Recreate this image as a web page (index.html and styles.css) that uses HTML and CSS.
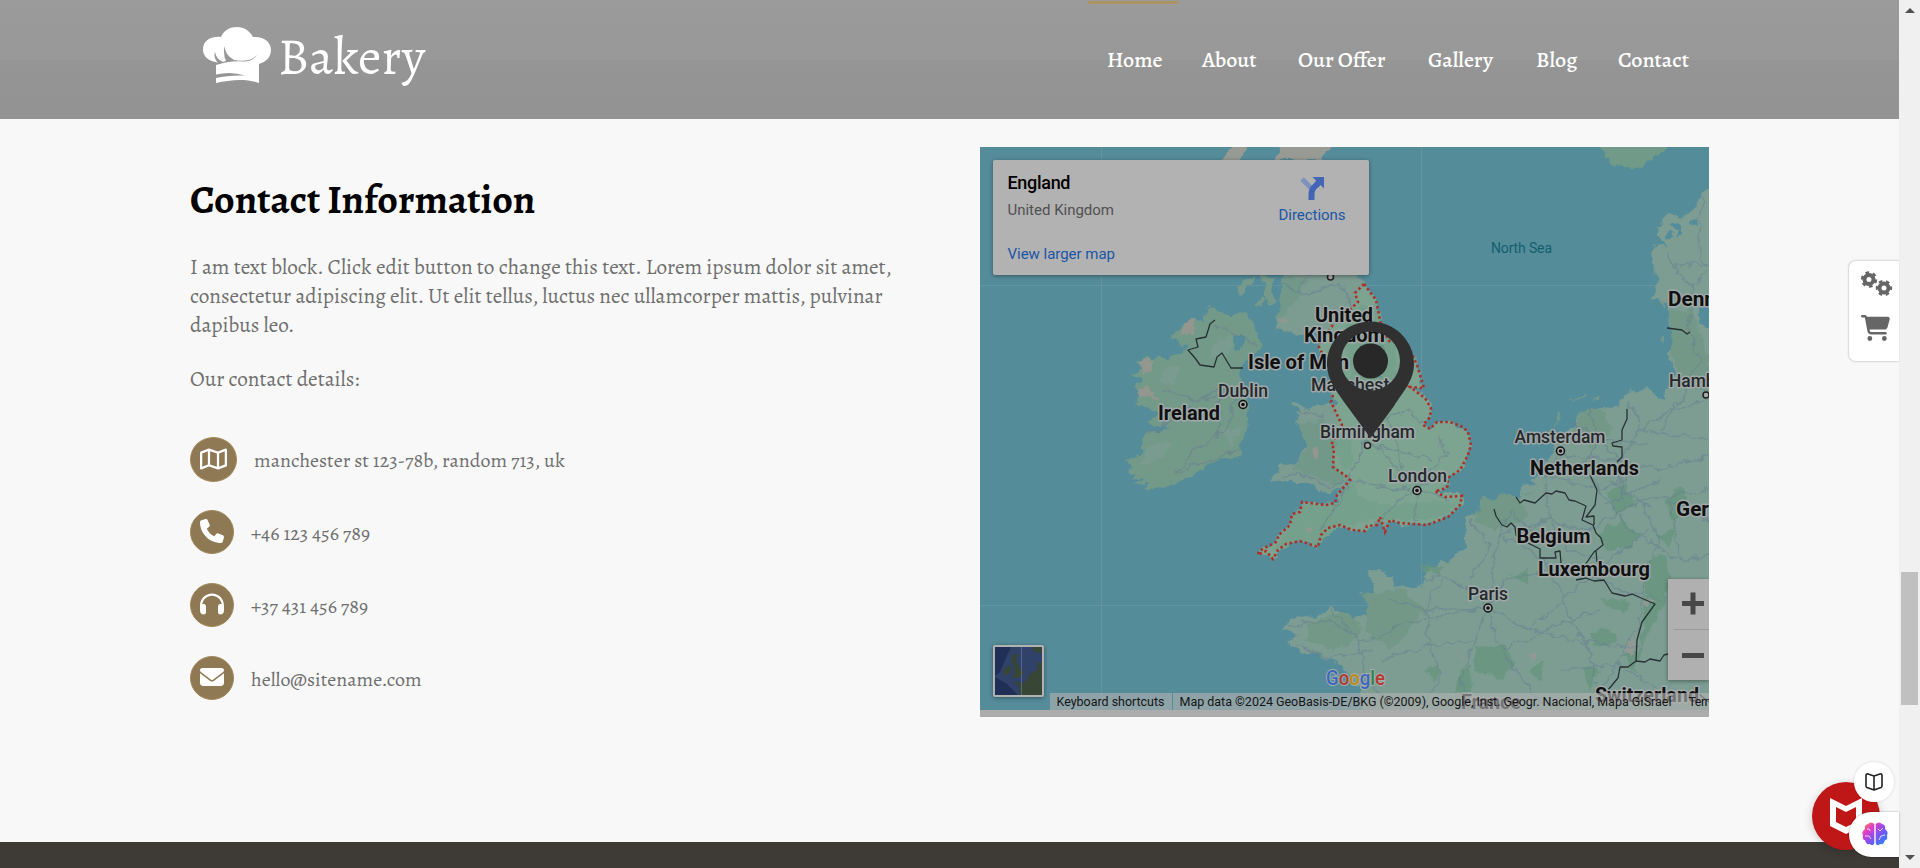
FILE: index.html
```html
<!DOCTYPE html>
<html lang="en">
<head>
<meta charset="utf-8">
<title>Bakery - Contact</title>
<link rel="stylesheet" href="styles.css">
</head>
<body>
<div class="window">
<div class="page">
  <header class="header">
    <span class="accent"></span>
    <a class="logo">
      <svg width="68" height="56" viewBox="0 0 68 56"><path fill="#fff" d="M13 35C5 34 0 29 0 22.500C0 14 7 9 18 10C21 3 27 0 34 0S47 4 50 10C61 9 68 15 68 23C68 30 63 35 56 37V56C42 51 27 53 13 56V51Q25 48 42 48.500Q28 44 13 47.500V38Q27 33 42 34.500Q50 34 54 28Q46 36 31 33Q22 28 21.500 19Q20 28 23 34L20 35Q13 32 12 25Q10 30 15 36Z"/></svg>
      <span class="logo-text">Bakery</span>
    </a>
    <nav class="nav"><a>Home</a><a>About</a><a>Our Offer</a><a>Gallery</a><a>Blog</a><a>Contact</a></nav>
  </header>
  <main class="main">
    <section class="info">
      <h1>Contact Information</h1>
      <p class="l1">I am text block. Click edit button to change this text. Lorem ipsum dolor sit amet, <br>consectetur adipiscing elit. Ut elit tellus, luctus nec ullamcorper mattis, pulvinar <br>dapibus leo.</p>
      <p class="details">Our contact details:</p>
      <ul class="list">
        <li><span class="ico wide"><svg width="27" height="24" viewBox="0 0 576 512"><path fill="#fff" d="M565.600 36.200C572.100 40.700 576 48.100 576 56V392c0 10-6.200 18.900-15.500 22.400l-168 64c-5.200 2-10.900 2.100-16.100.3L192.500 417.500l-160 61c-7.400 2.800-15.700 1.800-22.200-2.700S0 463.900 0 456V120c0-10 6.100-18.900 15.500-22.400l168-64c5.200-2 10.900-2.100 16.100-.3L383.500 94.500l160-61c7.400-2.800 15.700-1.800 22.200 2.700zM48 136.500V421.200l120-45.700V90.800L48 136.500zM360 422.700V137.300l-144-48V374.700l144 48zm48-1.500l120-45.700V90.800L408 136.500V421.200z"/></svg></span><span>manchester st 123-78b, random 713, uk</span></li>
        <li><span class="ico"><svg width="24" height="24" viewBox="0 0 512 512"><path fill="#fff" d="M164.900 24.600c-7.700-18.600-28-28.500-47.400-23.200l-88 24C12.100 30.200 0 46 0 64C0 311.400 200.600 512 448 512c18 0 33.800-12.100 38.600-29.500l24-88c5.300-19.400-4.600-39.700-23.200-47.400l-96-40c-16.300-6.800-35.200-2.100-46.300 11.600L304.700 368C234.300 334.700 177.300 277.700 144 207.300L193.300 167c13.700-11.200 18.400-30 11.600-46.300l-40-96z"/></svg></span><span>+46 123 456 789</span></li>
        <li><span class="ico"><svg width="24" height="24" viewBox="0 0 512 512"><path fill="#fff" d="M256 80C149.900 80 62.400 159.400 49.600 262c9.400-3.800 19.600-6 30.400-6c26.500 0 48 21.500 48 48V432c0 26.500-21.500 48-48 48c-44.200 0-80-35.800-80-80V288C0 146.600 114.600 32 256 32s256 114.600 256 256V400c0 44.200-35.800 80-80 80c-26.500 0-48-21.500-48-48V304c0-26.500 21.500-48 48-48c10.800 0 21 2.100 30.400 6C449.600 159.400 362.100 80 256 80z"/></svg></span><span>+37 431 456 789</span></li>
        <li><span class="ico"><svg width="24" height="24" viewBox="0 0 512 512"><path fill="#fff" d="M48 64C21.500 64 0 85.500 0 112c0 15.100 7.100 29.300 19.200 38.400L236.800 313.600c11.400 8.500 27 8.500 38.400 0L492.800 150.400c12.100-9.100 19.200-23.300 19.200-38.400c0-26.500-21.500-48-48-48H48zM0 176V384c0 35.300 28.700 64 64 64H448c35.300 0 64-28.700 64-64V176L294.400 339.200c-22.800 17.100-54 17.100-76.800 0L0 176z"/></svg></span><span>hello@sitename.com</span></li>
      </ul>
    </section>
    <section class="map">
      <svg width="729" height="570" viewBox="980 147 729 570">
        <defs><filter id="coast" filterUnits="userSpaceOnUse" x="970" y="137" width="749" height="590"><feTurbulence type="fractalNoise" baseFrequency=".09" numOctaves="3" seed="4"/><feDisplacementMap in="SourceGraphic" scale="11" xChannelSelector="R" yChannelSelector="G"/></filter></defs>
        <rect class="sea" x="980" y="147" width="729" height="563"/>
        <g class="grid"><path d="M1101.500 147V710M1421.500 147V710M980 285.500H1709M980 605.500H1709"/></g>
        <g filter="url(#coast)">
        <g class="land">
          <path d="M1220 162L1226 154L1243 140H1250L1240 161ZM1268 160L1282 153L1272 140H1331L1322 160Z" fill="#979b94"/>
          <path d="M1588 140L1608 156L1611 165L1624 166L1633 169L1645 166L1672 140Z" fill="#719b88"/>
          <path fill="#7c9b91" d="M1283 270L1285 284L1291 292L1290 302L1278 318L1274 330L1290 332L1300 337L1310 330L1318 338L1322 350L1332 360L1334 385L1330 395L1340 407L1320 405L1307 410L1295 402L1291 404L1300 411L1296 422L1303 430L1307 445L1296 462L1279 466L1273 480L1290 483L1305 483L1318 491L1330 494L1346 486L1337 495L1335 503L1313 502L1302 504L1300 512L1292 514L1290 525L1279 535L1274 544L1259 551L1259 555L1266 553L1273 559L1278 549L1286 544L1300 541L1318 547L1321 535L1328 528L1340 525L1352 530L1365 531L1380 522L1385 530L1390 520L1427 525L1448 517L1460 505L1462 496L1445 497L1435 491L1447 488L1448 478L1460 470L1468 455L1471 445L1468 432L1450 422L1437 422L1430 429L1423 425L1431 415L1429 402L1412 387L1423 388L1417 365L1408 340L1385 340L1380 320L1376 300L1364 284L1350 270Z"/>
          <path fill="#7da391" d="M1364 284L1355 293L1358 302L1342 317L1318 345L1324 357L1334 365L1333 395L1338 418L1331 445L1333 467L1345 474L1346 487L1335 503L1313 502L1302 504L1290 525L1274 544L1259 551L1273 559L1286 544L1300 541L1318 547L1321 535L1340 525L1365 531L1380 522L1427 525L1448 517L1460 505L1462 496L1435 491L1447 488L1448 478L1460 470L1471 445L1468 432L1450 422L1437 422L1430 429L1423 425L1431 415L1429 402L1412 387L1423 388L1408 340L1385 340L1376 300Z"/>
          <path fill="#74a08b" d="M1302 504L1335 503L1348 480L1365 500L1400 505L1430 500L1458 503L1445 517L1380 520L1340 525L1318 545L1300 541L1274 550L1290 525ZM1334 440L1350 430L1352 465L1345 472ZM1345 310L1375 305L1395 345L1400 380L1350 380Z"/>
          <path fill="#729889" d="M1300 425L1325 418L1336 445L1334 466L1345 474L1340 487L1312 475L1290 470L1307 450ZM1283 275L1310 282L1298 295L1278 320Z"/>
          <path d="M1237 290L1243 280L1255 276L1250 287L1240 295ZM1262 276H1276L1272 290L1275 302L1268 305L1265 292ZM1255 308L1262 296L1266 300L1260 309Z" fill="#74998a"/>
          <path fill="#739989" d="M1211 307L1222 313L1230 320L1236 313L1249 315L1258 335L1264 345L1248 358L1238 368L1245 385L1249 410L1246 430L1241 445L1240 458L1215 460L1200 470L1188 478L1175 485L1155 488L1142 491L1150 482L1136 485L1144 478L1132 480L1138 473L1126 473L1131 466L1125 460L1135 456L1148 451L1140 445L1147 433L1170 428L1146 424L1160 415L1150 408L1136 402L1140 395L1133 385L1142 377L1133 375L1142 366L1135 358L1152 358L1165 360L1178 352L1188 345L1172 340L1183 322L1195 318L1204 322L1206 309Z"/>
          <path fill="#7d9b91" opacity=".7" d="M1210 345L1235 335L1230 355L1212 358ZM1165 370L1180 365L1175 385L1160 380ZM1150 445L1175 440L1160 460L1140 465ZM1222 425L1240 430L1230 450Z"/>
          <path fill="#949690" d="M1183 322L1198 318L1192 332L1180 336ZM1140 359L1152 360L1152 372L1142 375ZM1137 390L1150 385L1157 400L1142 397ZM1278 320L1286 318L1286 326ZM1314 449L1319 450L1318 459L1313 456ZM1305 528L1311 530L1307 534Z"/>
          <path fill="#7d9d93" d="M1720 185L1703 193L1690 212L1676 217L1663 218L1656 230L1660 240L1670 248L1655 244L1652 250L1654 270L1658 282L1653 297L1667 305L1668 328L1672 345L1667 358L1675 372L1668 385L1664 400L1658 398L1650 388L1630 390L1621 400L1620 408L1600 407L1580 412L1574 425L1555 440L1550 455L1538 478L1520 489L1520 497L1500 505L1490 510L1466 518L1466 550L1440 562L1425 575L1423 587L1413 588L1395 585L1385 572L1368 571L1369 582L1376 592L1379 615L1358 617L1345 622L1337 609L1328 609L1320 615L1290 620L1285 630L1298 634L1288 643L1300 652L1315 653L1330 660L1345 668L1352 678L1360 690L1362 720H1720Z"/>
          <path fill="#739887" d="M1668 310H1690L1709 355V395L1680 380L1670 350ZM1365 595L1400 588L1425 610L1390 650L1368 635ZM1480 500L1510 494L1530 515L1500 530L1475 522ZM1580 410L1600 408L1612 430L1590 450L1575 435ZM1310 622L1340 612L1365 625L1340 650L1305 640Z"/>
          <path fill="#67957f" opacity=".85" d="M1608 492L1625 480L1635 505L1615 515ZM1600 530L1622 520L1640 535L1628 550L1605 548ZM1646 560L1665 555L1672 580L1662 610L1640 650L1645 600ZM1600 598L1630 600L1625 613L1610 605ZM1590 632L1610 628L1615 642L1595 648ZM1475 648L1505 645L1515 665L1500 680L1475 672ZM1460 670L1470 665L1472 690L1455 695ZM1530 670L1545 660L1540 682ZM1580 665L1600 670L1590 690ZM1622 655L1640 650L1635 672ZM1675 610L1688 600L1690 630L1675 640ZM1418 565L1445 568L1440 575ZM1665 500L1680 485L1690 510L1670 520ZM1655 535L1675 530L1668 545ZM1510 575L1528 568L1530 585ZM1425 670L1438 665L1435 680Z"/>
          <path fill="#929994" d="M1630 640L1636 635L1633 655L1625 652ZM1528 655L1540 654L1535 661ZM1646 601L1654 602L1647 606ZM1458 655L1463 656L1459 660Z"/>
          <path fill="#558c9a" d="M1668 225L1683 222V235L1676 240L1680 228ZM1665 235L1672 232L1674 238L1667 240ZM1690 222L1698 219L1695 226ZM1700 300L1720 290V330L1698 325ZM1522 482L1538 485L1530 488L1520 487ZM1234 337H1243V348H1235Z"/>
          <path fill="#759a8b" d="M1556 425L1560 413L1563 420ZM1568 400L1585 396L1583 399ZM1590 398L1602 396L1600 399ZM1520 490L1535 490L1528 495ZM1658 300L1665 302V310ZM1662 340L1666 335L1666 342ZM1357 592L1364 593L1360 595Z"/>
        </g>
        <g class="roads">
          <path d="M1215 325L1235 335L1258 345M1160 390L1195 400L1240 395M1190 405L1170 420L1150 434M1237 398L1225 430L1190 455L1175 472L1240 450M1200 400L1222 385L1218 440M1283 285L1310 295L1340 280L1352 310M1297 290L1310 275M1280 476L1305 475L1330 487L1350 480L1400 490M1365 440L1355 465L1340 500L1320 530M1365 440L1380 450L1415 485M1378 447L1430 458M1370 400L1395 430L1400 465L1417 490M1350 380L1375 405L1385 350L1365 310M1375 525L1400 500L1417 490L1450 500M1417 490L1445 455L1440 435M1417 490L1375 488M1300 410L1325 418M1417 490L1415 522M1385 420L1410 410L1425 425"/>
          <path d="M1290 625L1330 620L1360 640L1380 638L1400 625L1440 615L1488 608M1295 645L1330 658L1372 650M1360 640L1365 680L1400 710M1488 608L1470 590L1440 575L1425 580M1488 608L1505 580L1540 572L1580 570L1620 590L1660 600M1488 608L1530 630L1580 642L1640 648M1488 608L1475 640L1430 645L1380 660M1488 608L1500 650L1530 690L1550 710M1488 608L1493 570L1500 535L1510 510M1500 535L1548 520L1590 530L1640 500L1709 490M1470 520L1490 545L1470 580M1500 535L1545 560L1560 590L1570 620L1590 650L1600 710M1548 520L1545 475L1560 455L1620 460L1660 470L1709 455M1545 475L1600 490L1640 470M1600 440L1580 470L1600 490L1630 530L1680 560L1709 555M1590 410L1600 440L1620 460L1640 430L1709 440M1630 400L1640 430L1670 410L1709 400M1640 500L1660 540L1645 570L1640 620L1620 660L1600 690M1430 645L1425 610L1440 580M1430 645L1440 680L1420 710M1475 640L1460 680L1475 710M1360 640L1330 610M1530 630L1560 600L1610 560L1650 530M1510 510L1530 530L1548 520L1570 550L1600 560M1390 600L1425 610L1488 608M1690 330L1700 360L1680 400L1660 430M1668 255L1680 275L1692 285L1709 270M1703 195L1698 240L1705 265M1692 285L1688 330M1675 265L1709 265M1570 420L1600 440L1650 445M1610 480L1650 510M1620 470L1625 510M1605 505L1660 480M1680 560L1670 500L1709 520M1560 670L1620 665L1660 690M1500 650L1570 620L1600 610"/>
        </g>
        </g>
        <g class="borders">
          <path d="M1215 320L1210 324L1206 337L1196 339L1198 347L1188 350L1195 358L1200 365L1214 367L1217 357L1222 353L1231 368L1243 368"/>
          <path d="M1494 509L1496 516L1502 525L1507 527L1511 523L1515 527L1516 535L1522 540L1540 549V556L1540 558H1556L1555 552L1560 551L1561 563M1516 497L1520 503L1524 500L1535 503L1546 493L1552 494L1556 491L1565 493L1569 500L1575 501L1586 506L1582 520L1593 525L1596 533L1601 538L1603 545L1594 552L1585 565M1590 475L1597 490L1595 505L1586 517L1594 516L1594 525M1596 551L1597 562M1576 580L1586 578L1594 581L1604 580L1612 593L1625 596L1632 594L1655 604L1642 622L1637 640L1636 661L1628 667L1620 667L1618 678L1608 690M1636 661L1645 662L1650 659L1660 661L1664 655L1668 654M1622 430V440L1612 443L1613 446L1622 447V457L1617 462M1627 409V419L1622 430M1667 328L1682 330L1687 334L1690 332M1692 690V695L1700 695L1709 702"/>
        </g>
        <path class="england" d="M1364 284L1355 293L1358 302L1342 317M1333 325L1318 345L1324 357M1333 395L1331 402L1342 425L1331 445L1334 448L1333 467L1346 476L1350 480L1337 495L1335 503L1326 505L1302 502L1300 512L1292 514L1290 525L1279 535L1276 542L1259 551L1258 555L1266 551L1273 559L1278 550L1286 544L1300 541L1318 547L1321 535L1328 528L1340 525L1352 530L1365 531L1367 526L1377 525L1380 517L1385 532L1390 520L1400 523L1427 525L1448 517L1460 505L1462 496L1445 497L1435 491L1447 488L1448 478L1460 470L1468 455L1471 445L1468 432L1463 427L1450 422L1437 422L1430 429L1423 425L1430 417L1431 408L1425 398L1410 387L1424 388L1417 365L1408 345M1390 342L1382 330L1376 300L1364 284"/>
        <g class="cities">
          <g class="dots"><circle cx="1243" cy="404.500" r="4"/><circle cx="1417" cy="490.500" r="4"/><circle cx="1560.500" cy="451" r="4"/><circle cx="1488" cy="608" r="4"/></g>
          <g class="cores"><circle cx="1243" cy="404.500" r="1.800"/><circle cx="1417" cy="490.500" r="1.800"/><circle cx="1560.500" cy="451" r="1.800"/><circle cx="1488" cy="608" r="1.800"/></g>
          <g class="small"><circle cx="1367.500" cy="445.500" r="3"/><circle cx="1330.500" cy="277" r="3"/><circle cx="1706" cy="395" r="3"/></g>
        </g>
        <g class="country">
          <text x="1315" y="321.500" textLength="58" lengthAdjust="spacingAndGlyphs">United</text><text x="1304" y="341.500" textLength="81" lengthAdjust="spacingAndGlyphs">Kingdom</text>
          <text x="1248" y="369" textLength="101" lengthAdjust="spacingAndGlyphs">Isle of Man</text><text x="1158" y="420" textLength="62" lengthAdjust="spacingAndGlyphs">Ireland</text>
          <text x="1668" y="306" textLength="84" lengthAdjust="spacingAndGlyphs">Denmark</text><text x="1530" y="475" textLength="109" lengthAdjust="spacingAndGlyphs">Netherlands</text>
          <text x="1676" y="516" textLength="84" lengthAdjust="spacingAndGlyphs">Germany</text><text x="1516.500" y="543" textLength="74" lengthAdjust="spacingAndGlyphs">Belgium</text>
          <text x="1538" y="575.500" textLength="112" lengthAdjust="spacingAndGlyphs">Luxembourg</text><text x="1595" y="702" textLength="104" lengthAdjust="spacingAndGlyphs">Switzerland</text><text x="1461" y="709" textLength="60" lengthAdjust="spacingAndGlyphs">France</text>
        </g>
        <g class="city">
          <text x="1218" y="396.500" textLength="50" lengthAdjust="spacingAndGlyphs">Dublin</text><text x="1311" y="391" textLength="94" lengthAdjust="spacingAndGlyphs">Manchester</text>
          <text x="1320" y="438" textLength="95" lengthAdjust="spacingAndGlyphs">Birmingham</text><text x="1388" y="482" textLength="59" lengthAdjust="spacingAndGlyphs">London</text>
          <text x="1514.500" y="443" textLength="91" lengthAdjust="spacingAndGlyphs">Amsterdam</text><text x="1468" y="600" textLength="40" lengthAdjust="spacingAndGlyphs">Paris</text><text x="1669" y="387" textLength="72" lengthAdjust="spacingAndGlyphs">Hamburg</text>
        </g>
        <text class="ocean" x="1491" y="253" textLength="61">North Sea</text>
        <path fill="#303030" fill-rule="evenodd" d="M1370.500 321.500C1346 321.500 1327 341 1327 364C1327 381 1338 393 1347 406L1370.500 438L1394 406C1402 393 1414 381 1414 364C1414 341 1395 321.500 1370.500 321.500ZM1370.500 331.500A29.500 29.500 0 1 1 1370.500 390.500A29.500 29.500 0 1 1 1370.500 331.500Z"/>
        <circle cx="1370.500" cy="361" r="17.500" fill="#282828"/>
        <g class="google"><text x="1326" y="685" textLength="59" lengthAdjust="spacingAndGlyphs"><tspan fill="#3b68bd">G</tspan><tspan fill="#b03a32">o</tspan><tspan fill="#b88c16">o</tspan><tspan fill="#3b68bd">g</tspan><tspan fill="#2f8549">l</tspan><tspan fill="#b53a32">e</tspan></text></g>
        <path d="M1050 693H1172V710H1050ZM1173 693H1709V710H1173Z" fill="#b2b2b2" opacity=".62"/>
        <g class="credits"><text x="1056.500" y="706" textLength="108">Keyboard shortcuts</text><text x="1179.500" y="706" textLength="492">Map data ©2024 GeoBasis-DE/BKG (©2009), Google, Inst. Geogr. Nacional, Mapa GISrael</text><text x="1688.500" y="706" textLength="33">Terms</text></g>
        <rect x="980" y="710" width="729" height="7" fill="#acacac"/>
        <g class="card"><rect x="993" y="160" width="376" height="115" rx="2" fill="#b2b2b2"/></g>
        <text class="title" x="1007.500" y="189" textLength="63">England</text>
        <text class="sub" x="1007.500" y="215" textLength="106.500">United Kingdom</text>
        <text class="link" x="1007.500" y="259" textLength="107.500">View larger map</text>
        <text class="link" x="1278.500" y="220" textLength="67">Directions</text>
        <path d="M1302 179L1312 189" stroke="#7d92bd" stroke-width="5"/><path d="M1311.500 200V194Q1311.500 189 1316 185.500L1320 181" fill="none" stroke="#4266b5" stroke-width="6"/><path d="M1312.500 177H1324V188.500Z" fill="#4266b5"/>
        <g class="card"><rect x="993" y="645" width="51" height="52" rx="2" fill="#b2b2b2"/></g>
        <rect x="995" y="647" width="47" height="48" fill="#30416a"/>
        <path fill="#202f55" d="M995 647H1011L1005 660L1000 672L995 676ZM995 677L1007 684L1018 695H995Z"/><path fill="#384635" d="M1012 655L1018 654L1016 661L1020 668L1024 673L1021 677L1012 678L1015 669L1011 662ZM1003 671L1008 665L1012 668L1009 674L1004 675ZM1042 663L1037 662L1038 669L1030 674L1024 683L1014 681L1019 687V695H1042ZM1032 647H1042V653L1034 652Z"/><path d="M1021.500 647V695" stroke="#68779a" opacity=".7"/>
        <g class="card"><rect x="1668" y="579" width="41" height="101" fill="#b0b0b0"/></g>
        <path d="M1682 603.500H1704M1693 592.500V614.500M1682 655.500H1704" stroke="#474747" stroke-width="5"/><path d="M1674 629.500H1709" stroke="#999"/>
      </svg>
    </section>
  </main>
  <footer class="footer"></footer>
  <aside class="side-tools">
    <svg width="32" height="26" viewBox="0 0 32 26"><g fill="none" stroke="#666"><circle cx="8" cy="8.500" r="4.500" stroke-width="4"/><circle cx="8" cy="8.500" r="7" stroke-width="2.400" stroke-dasharray="3.660 3.660"/><circle cx="23" cy="17" r="4.500" stroke-width="4"/><circle cx="23" cy="17" r="7" stroke-width="2.400" stroke-dasharray="3.660 3.660" stroke-dashoffset="1.800"/></g></svg>
    <svg width="29" height="26" viewBox="0 0 576 512"><path fill="#666" d="M0 24C0 10.700 10.700 0 24 0H69.500c22 0 41.500 12.800 50.600 32h411c26.300 0 45.500 25 38.600 50.400l-41 152.300c-8.500 31.400-37 53.300-69.500 53.300H170.700l5.400 28.500c2.200 11.300 12.100 19.500 23.600 19.500H488c13.300 0 24 10.700 24 24s-10.700 24-24 24H199.700c-34.600 0-64.300-24.600-70.700-58.500L77.400 54.500c-.7-3.800-4-6.500-7.900-6.500H24C10.700 48 0 37.300 0 24zM128 464a48 48 0 1 1 96 0 48 48 0 1 1-96 0zm336-48a48 48 0 1 1 0 96 48 48 0 1 1 0-96z"/></svg>
  </aside>
  <div class="shield"><svg width="32" height="36" viewBox="0 0 32 36"><path fill="#fff" d="M0 0L16 8L32 0V28L16 36L0 28ZM6 9V24L16 29L26 24V9L16 14Z"/></svg></div>
  <div class="reader"><svg width="18" height="18" viewBox="0 0 18 18" fill="none" stroke="#222" stroke-width="1.600" stroke-linejoin="round"><path d="M9 3L3 1Q1 .5 1 2.500V13Q1 14 2 14.500L9 17L16 14.500Q17 14 17 13V2.500Q17 .5 15 1ZM9 3V17"/></svg></div>
  <div class="brain"><svg width="26" height="25" viewBox="0 0 26 25"><defs><linearGradient id="b" x1="0" y1="0" x2="1" y2="1"><stop offset="0" stop-color="#ff9838"/><stop offset=".28" stop-color="#e33cc4"/><stop offset=".55" stop-color="#8350f3"/><stop offset="1" stop-color="#208df8"/></linearGradient></defs><path fill="url(#b)" d="M12.300 2Q9-1 6 2Q2 3 3 7Q-1 10 1 13Q0 18 3 18Q4 23 8 22Q11 25 12.300 21ZM13.700 2Q17-1 20 2Q24 3 23 7Q27 10 25 13Q26 18 23 18Q22 23 18 22Q15 25 13.700 21Z"/><path d="M5 7Q8 6 8 9M3 14H7L9 17M21 6L18 9L16 7M23 13L19 14L17 18" fill="none" stroke="#fff" stroke-width="1" opacity=".75"/></svg></div>
</div>
<div class="scrollbar"><i class="up"></i><i class="thumb"></i><i class="down"></i></div>
</div>
</body>
</html>
```
FILE: styles.css
```css
* { box-sizing: border-box; }
body { margin: 0; background: #f8f8f8; font-family: Alegreya, "Liberation Serif", serif; overflow: hidden; }
.window { display: flex; height: 868px; }
.page { position: relative; width: 1899px; height: 868px; display: flex; flex-direction: column; }
.header { position: relative; height: 119px; padding: 27px 207px 0 203px; display: flex; justify-content: space-between; background: linear-gradient(#9b9b9b 0, #989898 60px, #959595 60px, #939393 119px); color: #fff; }
.accent { position: absolute; left: 1088px; top: 1px; width: 91px; height: 3px; background: #ac9462; border-radius: 1px; }
.logo { display: flex; gap: 7px; }
.logo-text { font-size: 52px; line-height: 60px; }
.nav { display: grid; grid-template-columns: 95px 96px 130px 108px 82px 74px; font-size: 22px; font-weight: 500; line-height: 66px; white-space: nowrap; }
.main { height: 723px; padding: 28px 190px 0; display: flex; justify-content: space-between; }
.info { width: 730px; color: #6f6f6f; padding-top: 28px; }
h1 { margin: 0; font-size: 40px; line-height: 50px; color: #000; font-weight: 700; white-space: nowrap; }
p { margin: 0; font-size: 21.280px; line-height: 29px; white-space: nowrap; }
.l1 { margin-top: 27px; }
.details { margin-top: 25px; }
.list { list-style: none; margin: 44px 0 0; padding: 0; display: grid; grid-auto-rows: 73px; font-size: 20px; }
.list li { display: flex; align-items: flex-start; gap: 17px; line-height: 47px; white-space: nowrap; }
.ico { width: 44px; height: 44px; border-radius: 50%; background: #8f7955; border: 1px solid #a08958; display: flex; align-items: center; justify-content: center; padding-bottom: 2px; }
.wide { width: 47px; height: 45px; }
.map { width: 729px; height: 570px; overflow: hidden; font-family: Roboto, sans-serif; }
.map svg { display: block; }
.sea { fill: #558c9a; }
.grid { stroke: #6997a1; fill: none; opacity: .7; }
.roads { fill: none; stroke: #687f91; stroke-width: 1.600; opacity: .55; stroke-linejoin: round; }
.borders { fill: none; stroke: #283033; stroke-width: 1.300; stroke-linejoin: round; }
.england { fill: none; stroke: #ad3028; stroke-width: 2.600; stroke-dasharray: 2.500 2.700; }
.dots { fill: #aaa; stroke: #111; stroke-width: 1.500; }
.cores { fill: #111; }
.small { fill: #aaa; stroke: #222; stroke-width: 1.500; }
.country, .city { paint-order: stroke; stroke: #a2a9a9; stroke-width: 3px; stroke-linejoin: round; fill: #111; font-size: 20.500px; font-weight: 700; }
.city { font-size: 18px; font-weight: 500; fill: #24292c; }
.ocean { font-size: 14px; fill: #125f6d; }
.google { font-size: 20px; font-weight: 500; paint-order: stroke; stroke: #a5adad; stroke-width: 2px; }
.credits { font-size: 12.500px; fill: #151515; }
.card { filter: drop-shadow(0 1px 2px rgba(0,0,0,.4)); }
.title { font-size: 18px; font-weight: 500; fill: #000; }
.sub { font-size: 15px; fill: #515151; }
.link { font-size: 15px; fill: #1b56a5; }
.footer { height: 26px; background: #3e3a36; }
.side-tools { position: absolute; right: 0; top: 260px; width: 51px; height: 102px; padding: 10px 0 0 12px; background: #fff; border: 1px solid #ddd; border-right: 0; border-radius: 8px 0 0 8px; display: flex; flex-direction: column; gap: 18px; box-shadow: 0 0 2px #ddd; }
.shield { position: absolute; left: 1812px; top: 782px; width: 68px; height: 68px; border-radius: 50%; background: #bf1717; display: flex; align-items: center; justify-content: center; box-shadow: 0 2px 10px rgba(0,0,0,.18); }
.reader { position: absolute; left: 1854px; top: 762px; width: 40px; height: 40px; border-radius: 50%; background: #fff; display: flex; align-items: center; justify-content: center; box-shadow: 0 0 3px rgba(0,0,0,.15); }
.brain { position: absolute; left: 1849px; top: 812px; width: 50px; height: 45px; border-radius: 23px 0 0 23px; background: #fff; padding: 10px 0 0 13px; box-shadow: 0 0 2px rgba(0,0,0,.4); }
.scrollbar { width: 21px; height: 868px; background: #f0f0f0; display: flex; flex-direction: column; align-items: center; }
.up, .down { border: 5px solid transparent; width: 0; height: 0; }
.up { border-top: 0; border-bottom-color: #505050; margin-top: 8px; }
.thumb { width: 17px; height: 133px; background: #c0c0c0; margin-top: 559px; }
.down { border-bottom: 0; border-top-color: #505050; margin-top: 150px; }
```
